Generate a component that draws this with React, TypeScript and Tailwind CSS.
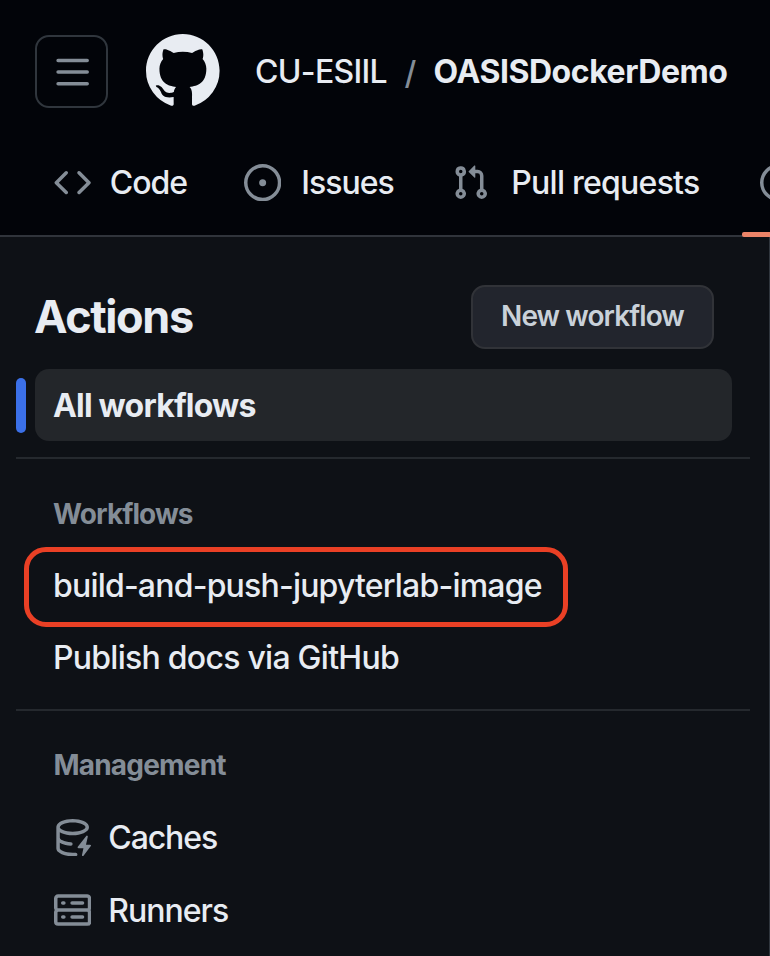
import type { ReactNode } from "react";

const Icon = ({ children, className = "size-[37.3px] text-[#848d97]" }: { children: ReactNode; className?: string }) => (
  <svg viewBox="0 0 16 16" fill="currentColor" className={`shrink-0 ${className}`}>
    {children}
  </svg>
);

const ThreeBars = () => (
  <Icon>
    <path d="M1 2.75A.75.75 0 0 1 1.75 2h12.5a.75.75 0 0 1 0 1.5H1.75A.75.75 0 0 1 1 2.75Zm0 5A.75.75 0 0 1 1.75 7h12.5a.75.75 0 0 1 0 1.5H1.75A.75.75 0 0 1 1 7.75ZM1.75 12h12.5a.75.75 0 0 1 0 1.5H1.75a.75.75 0 0 1 0-1.5Z" />
  </Icon>
);

const GitHubMark = () => (
  <Icon className="size-[73.6px] text-[#e8ecf2]">
    <path d="M8 0c4.42 0 8 3.58 8 8a8.013 8.013 0 0 1-5.45 7.59c-.4.08-.55-.17-.55-.38 0-.27.01-1.13.01-2.2 0-.75-.25-1.23-.54-1.48 1.78-.2 3.65-.88 3.65-3.95 0-.88-.31-1.59-.82-2.15.08-.2.36-1.02-.08-2.12 0 0-.67-.22-2.2.82-.64-.18-1.32-.27-2-.27-.68 0-1.36.09-2 .27-1.53-1.03-2.2-.82-2.2-.82-.44 1.1-.16 1.92-.08 2.12-.51.56-.82 1.28-.82 2.15 0 3.06 1.86 3.75 3.64 3.95-.23.2-.44.55-.51 1.07-.46.21-1.61.55-2.33-.66-.15-.24-.6-.83-1.23-.82-.67.01-.27.38.01.53.34.19.73.9.82 1.13.16.45.68 1.31 2.69.94 0 .67.01 1.3.01 1.49 0 .21-.15.45-.55.38A7.995 7.995 0 0 1 0 8c0-4.42 3.58-8 8-8Z" />
  </Icon>
);

const CodeIcon = () => (
  <Icon>
    <path d="m11.28 3.22 4.25 4.25a.75.75 0 0 1 0 1.06l-4.25 4.25a.749.749 0 0 1-1.275-.326.749.749 0 0 1 .215-.734L13.94 8l-3.72-3.72a.749.749 0 0 1 .326-1.275.749.749 0 0 1 .734.215Zm-6.56 0a.751.751 0 0 1 1.042.018.751.751 0 0 1 .018 1.042L2.06 8l3.72 3.72a.749.749 0 0 1-.326 1.275.749.749 0 0 1-.734-.215L.47 8.53a.75.75 0 0 1 0-1.06Z" />
  </Icon>
);

const IssueIcon = () => (
  <Icon>
    <path d="M8 9.5a1.5 1.5 0 1 0 0-3 1.5 1.5 0 0 0 0 3Z" />
    <path d="M8 0a8 8 0 1 1 0 16A8 8 0 0 1 8 0ZM1.5 8a6.5 6.5 0 1 0 13 0 6.5 6.5 0 0 0-13 0Z" />
  </Icon>
);

const PullRequestIcon = () => (
  <Icon>
    <path d="M1.5 3.25a2.25 2.25 0 1 1 3 2.122v5.256a2.251 2.251 0 1 1-1.5 0V5.372A2.25 2.25 0 0 1 1.5 3.25Zm5.677-.177L9.573.677A.25.25 0 0 1 10 .854V2.5h1A2.5 2.5 0 0 1 13.5 5v5.628a2.251 2.251 0 1 1-1.5 0V5a1 1 0 0 0-1-1h-1v1.646a.25.25 0 0 1-.427.177L7.177 3.427a.25.25 0 0 1 0-.354ZM3.75 2.5a.75.75 0 1 0 0 1.5.75.75 0 0 0 0-1.5Zm0 9.5a.75.75 0 1 0 0 1.5.75.75 0 0 0 0-1.5Zm8.25.75a.75.75 0 1 0 1.5 0 .75.75 0 0 0-1.5 0Z" />
  </Icon>
);

const PlayIcon = () => (
  <Icon>
    <path d="M8 0a8 8 0 1 1 0 16A8 8 0 0 1 8 0ZM1.5 8a6.5 6.5 0 1 0 13 0 6.5 6.5 0 0 0-13 0Zm4.879-2.773 4.264 2.559a.25.25 0 0 1 0 .428l-4.264 2.559A.25.25 0 0 1 6 10.559V5.442a.25.25 0 0 1 .379-.215Z" />
  </Icon>
);

const CacheIcon = () => (
  <Icon>
    <path d="M2.5 5.724V8c0 .248.238.7 1.169 1.159.874.43 2.144.745 3.62.822a.75.75 0 1 1-.078 1.498c-1.622-.085-3.102-.432-4.204-.975a5.565 5.565 0 0 1-.507-.28V12.5c0 .133.058.318.282.551.227.237.591.483 1.101.707 1.015.447 2.47.742 4.117.742.406 0 .802-.018 1.183-.052a.751.751 0 1 1 .134 1.494C8.89 15.98 8.45 16 8 16c-1.805 0-3.475-.32-4.721-.869-.623-.274-1.173-.619-1.579-1.041-.408-.425-.7-.964-.7-1.59v-9c0-.626.292-1.165.7-1.591.406-.42.956-.766 1.579-1.04C4.525.32 6.195 0 8 0c1.806 0 3.476.32 4.721.869.623.274 1.173.619 1.579 1.041.408.425.7.964.7 1.59 0 .626-.292 1.165-.7 1.591-.406.42-.956.766-1.578 1.04C11.475 6.68 9.805 7 8 7c-1.805 0-3.475-.32-4.721-.869a6.15 6.15 0 0 1-.779-.407Zm0-2.224c0 .133.058.318.282.551.227.237.591.483 1.101.707C4.898 5.205 6.353 5.5 8 5.5c1.646 0 3.101-.295 4.118-.742.508-.224.873-.471 1.1-.708.224-.232.282-.417.282-.55 0-.133-.058-.318-.282-.551-.227-.237-.591-.483-1.101-.707C11.102 1.795 9.647 1.5 8 1.5c-1.646 0-3.101.295-4.118.742-.508.224-.873.471-1.1.708-.224.232-.282.417-.282.55Z" />
    <path d="M14.49 7.582a.375.375 0 0 0-.66-.313l-3.625 4.625a.375.375 0 0 0 .295.606h2.127l-.619 2.922a.375.375 0 0 0 .666.304l3.125-4.125A.375.375 0 0 0 15.5 11h-1.778l.769-3.418Z" />
  </Icon>
);

const ServerIcon = () => (
  <Icon>
    <path d="M1.75 1h12.5c.966 0 1.75.784 1.75 1.75v4c0 .372-.116.717-.314 1 .198.283.314.628.314 1v4a1.75 1.75 0 0 1-1.75 1.75H1.75A1.75 1.75 0 0 1 0 12.75v-4c0-.358.109-.707.314-1a1.739 1.739 0 0 1-.314-1v-4C0 1.784.784 1 1.75 1ZM1.5 2.75v4c0 .138.112.25.25.25h12.5a.25.25 0 0 0 .25-.25v-4a.25.25 0 0 0-.25-.25H1.75a.25.25 0 0 0-.25.25Zm.25 5.75a.25.25 0 0 0-.25.25v4c0 .138.112.25.25.25h12.5a.25.25 0 0 0 .25-.25v-4a.25.25 0 0 0-.25-.25ZM7 4.75A.75.75 0 0 1 7.75 4h4.5a.75.75 0 0 1 0 1.5h-4.5A.75.75 0 0 1 7 4.75ZM7.75 10h4.5a.75.75 0 0 1 0 1.5h-4.5a.75.75 0 0 1 0-1.5ZM3 4.75A.75.75 0 0 1 3.75 4h.5a.75.75 0 0 1 0 1.5h-.5A.75.75 0 0 1 3 4.75ZM3.75 10h.5a.75.75 0 0 1 0 1.5h-.5a.75.75 0 0 1 0-1.5Z" />
  </Icon>
);

function Header() {
  return (
    <header className="h-[237px] shrink-0 overflow-hidden border-b-2 border-[#30343b] bg-[#020409]">
      <div className="flex h-[143px] items-center pl-[35px]">
        <button className="flex size-[73px] items-center justify-center rounded-[14px] border-2 border-[#30363d] pt-[2px] pl-[2px]">
          <ThreeBars />
        </button>
        <div className="ml-[38px] pb-[2px]">
          <GitHubMark />
        </div>
        <span className="ml-[35.5px] w-[149.5px] font-medium tracking-[-0.7px]">CU-ESIIL</span>
        <span className="w-[29px] pt-[2px] font-medium text-[#848d97]">/</span>
        <span className="font-bold tracking-[-0.45px]">OASISDockerDemo</span>
      </div>
      <nav className="flex h-[79px] items-center pl-[53.5px] font-[450]">
        <a className="flex w-[190px] shrink-0 items-center gap-[19px]">
          <CodeIcon />
          <span className="pt-[2px] tracking-[-1.05px]">Code</span>
        </a>
        <a className="flex w-[208px] shrink-0 items-center gap-[20.5px]">
          <IssueIcon />
          <span className="pt-[2px] tracking-[-1px]">Issues</span>
        </a>
        <a className="flex w-[308px] shrink-0 items-center gap-[22.5px]">
          <PullRequestIcon />
          <span className="pt-[2px] tracking-[-0.75px]">Pull requests</span>
        </a>
        <PlayIcon />
      </nav>
    </header>
  );
}

export default function App() {
  return (
    <div className="relative flex h-[956px] w-[770px] flex-col overflow-hidden bg-[#0e1116] font-['Inter',sans-serif] text-[32px] leading-none whitespace-nowrap text-[#e8ecf2]">
      <Header />
      <div className="absolute top-[232px] left-[742px] h-[5px] w-[40px] rounded-[2px] bg-[#ec8468]" />
      <aside className="flex-1 border-r border-[#30363d] pr-[19px] pl-4">
        <div className="flex h-[132px] items-start justify-between pt-[48px] pr-[36px] pl-[18px]">
          <h1 className="pt-[9px] text-[45px] font-bold tracking-[-1.4px]">Actions</h1>
          <button className="flex h-16 w-[243px] items-center justify-center rounded-[14px] border-2 border-[#313338] bg-[#22252d] pb-[2px] text-[28px] font-[560] tracking-[-0.92px] text-[#c9d1d9]">
            New workflow
          </button>
        </div>
        <div className="flex items-center gap-[9px] pr-[18px]">
          <div className="h-[55px] w-[10px] rounded-[5px] bg-[#3b70e8]" />
          <div className="flex h-[72px] flex-1 items-center rounded-[14px] bg-[#23262a] pt-[2px] pl-[18px] font-bold tracking-[-0.8px]">
            All workflows
          </div>
        </div>
        <div className="mt-4 border-t-2 border-[#25292e]" />
        <h2 className="mt-[41px] pl-[37px] text-[28px] font-bold tracking-[-0.92px] text-[#848d97]">Workflows</h2>
        <div className="mt-[19px] ml-2 flex h-20 w-[544px] items-center rounded-[22px] border-[5px] border-[#ea4025] pb-[2px] pl-[24px] font-[450] tracking-[-0.81px]">
          build-and-push-jupyterlab-image
        </div>
        <div className="-mt-[5px] flex h-[72px] items-center pl-[37px] font-[450] tracking-[-0.74px]">Publish docs via GitHub</div>
        <div className="mt-[15px] border-t-2 border-[#25292e]" />
        <h2 className="mt-[40px] pl-[37.5px] text-[28px] font-bold tracking-[-0.8px] text-[#848d97]">Management</h2>
        <div className="mt-[22px] flex h-[73px] items-center gap-[17.5px] pl-[37.5px] font-[450]">
          <CacheIcon />
          <span className="tracking-[-1.1px]">Caches</span>
        </div>
        <div className="flex h-[73px] items-center gap-[17.5px] pl-[37.5px] font-[450]">
          <ServerIcon />
          <span className="tracking-[-1px]">Runners</span>
        </div>
      </aside>
    </div>
  );
}
